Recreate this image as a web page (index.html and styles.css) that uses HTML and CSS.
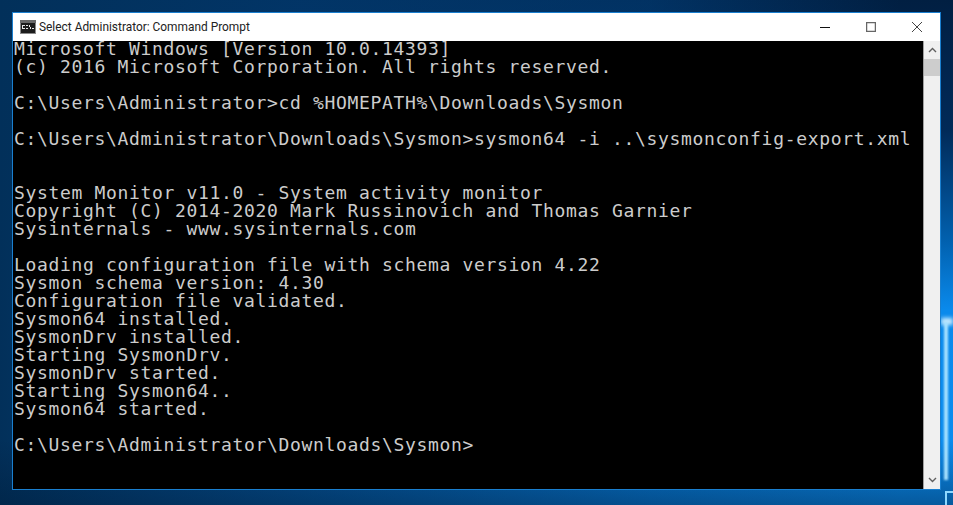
FILE: index.html
```html
<!DOCTYPE html>
<html lang="en">
<head>
<meta charset="utf-8">
<title>Select Administrator: Command Prompt</title>
<link rel="stylesheet" href="styles.css">
</head>
<body>
<div class="desktop">
  <div class="logo-glow logo-glow-top"></div>
  <div class="logo-glow logo-glow-left"></div>
  <div class="logo-glow logo-glow-bottom"></div>
  <section class="window">
    <header class="titlebar">
      <svg class="app-icon" width="16" height="16" viewBox="0 0 16 16">
        <rect x="0" y="1" width="16" height="14" fill="#8a8a8a"/>
        <rect x="0" y="1" width="16" height="3" fill="#6a6a6a"/>
        <rect x="1" y="4" width="14" height="10" fill="#1c1c1c"/>
        <path d="M2 6h3v1H3v2h2v1H2zM6 6h2v1H6zM6 9h2v1H6zM9 6h1v2H9zM10 8h1v2h-1zM12 9h2v1h-2z" fill="#e6e6e6"/>
      </svg>
      <span class="title">Select Administrator: Command Prompt</span>
      <div class="controls">
        <button class="ctl" aria-label="Minimize"><svg width="10" height="10" viewBox="0 0 10 10"><path d="M0 5.5h10" stroke="#111" fill="none"/></svg></button>
        <button class="ctl" aria-label="Maximize"><svg width="10" height="10" viewBox="0 0 10 10"><rect x=".6" y=".6" width="8.8" height="8.8" stroke="#666" stroke-width="1.3" fill="none"/></svg></button>
        <button class="ctl" aria-label="Close"><svg width="10" height="10" viewBox="0 0 10 10"><path d="M0 0l10 10M10 0L0 10" stroke="#444" fill="none"/></svg></button>
      </div>
    </header>
    <div class="body">
<pre class="console">Microsoft Windows [Version 10.0.14393]
(c) 2016 Microsoft Corporation. All rights reserved.

C:\Users\Administrator&gt;cd %HOMEPATH%\Downloads\Sysmon

C:\Users\Administrator\Downloads\Sysmon&gt;sysmon64 -i ..\sysmonconfig-export.xml


System Monitor v11.0 - System activity monitor
Copyright (C) 2014-2020 Mark Russinovich and Thomas Garnier
Sysinternals - www.sysinternals.com

Loading configuration file with schema version 4.22
Sysmon schema version: 4.30
Configuration file validated.
Sysmon64 installed.
SysmonDrv installed.
Starting SysmonDrv.
SysmonDrv started.
Starting Sysmon64..
Sysmon64 started.

C:\Users\Administrator\Downloads\Sysmon&gt;</pre>
      <div class="scrollbar">
        <svg class="arrow" width="9" height="6" viewBox="0 0 9 6"><path d="M1 5l3.5-3.5L8 5" stroke="#606060" stroke-width="1.4" fill="none"/></svg>
        <div class="thumb"></div>
        <div class="track"></div>
        <svg class="arrow" width="9" height="6" viewBox="0 0 9 6"><path d="M1 1l3.5 3.5L8 1" stroke="#606060" stroke-width="1.4" fill="none"/></svg>
      </div>
    </div>
  </section>
</div>
</body>
</html>
```
FILE: styles.css
```css
* { box-sizing: border-box; }
html, body { margin: 0; padding: 0; }
body { width: 953px; height: 505px; overflow: hidden; }
.desktop {
  position: relative;
  width: 953px;
  height: 505px;
  padding: 12px 12px 15px 12px;
  overflow: hidden;
  background:
    linear-gradient(180deg, rgba(1,30,60,0) 440px, rgba(0,28,58,.45) 505px),
    linear-gradient(90deg, #02305a 0, rgba(2,60,115,.75) 300px, rgba(2,85,160,.35) 650px, rgba(3,110,200,0) 900px),
    linear-gradient(180deg, #011f42 0, #012a58 130px, #0160ae 240px, #0a8aec 310px, #0a8cef 100%);
}
.logo-glow { position: absolute; }
.logo-glow-top { left: 941px; top: 318px; width: 12px; height: 7px; background: #cfeeff; filter: blur(2px); }
.logo-glow-left { left: 944px; top: 322px; width: 4px; height: 158px; background: #a8e2ff; filter: blur(1px); }
.logo-glow-bottom { left: 945px; top: 491px; width: 8px; height: 14px; border-left: 2px solid #8fd8ff; border-top: 2px solid #8fd8ff; filter: blur(.6px); }
.window {
  position: relative;
  width: 929px;
  height: 478px;
  border: 1px solid #1a7fcf;
  display: flex;
  flex-direction: column;
  background: #000;
}
.titlebar {
  position: relative;
  z-index: 1;
  height: 28px;
  flex: none;
  background: #fff;
  display: flex;
  align-items: center;
  padding-left: 7px;
}
.app-icon { flex: none; margin-right: 3px; }
.title {
  font: 11.9px Roboto, "Noto Sans", sans-serif;
  color: #222;
  white-space: nowrap;
}
.controls { margin-left: auto; display: flex; height: 100%; }
.ctl {
  width: 46px;
  height: 100%;
  padding: 0;
  border: 0;
  background: none;
  display: flex;
  align-items: center;
  justify-content: center;
}
.body { flex: 1; min-height: 0; display: flex; }
.console {
  flex: 1;
  margin: -1px 0 0;
  padding: 0 0 0 1px;
  background: #000;
  color: #ccc;
  font: 18px/18px "DejaVu Sans Mono", monospace;
  letter-spacing: .665px;
}
.scrollbar {
  width: 17px;
  flex: none;
  background: #f0f0f0;
  display: flex;
  flex-direction: column;
  align-items: center;
  border-left: 1px solid #a0a0a0;
}
.arrow { flex: none; margin: 6px 0; }
.thumb { width: 100%; height: 17px; background: #cdcdcd; flex: none; }
.track { flex: 1; }
```
